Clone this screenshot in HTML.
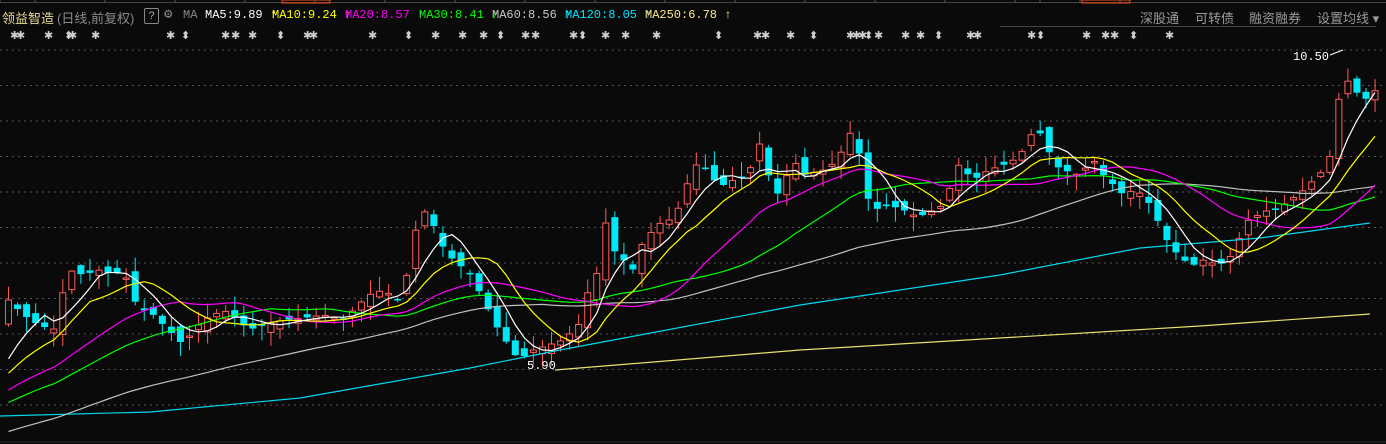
<!DOCTYPE html>
<html><head><meta charset="utf-8"><style>
html,body{margin:0;padding:0;background:#0a0a0a;width:1386px;height:444px;overflow:hidden}
.hd{position:absolute;top:8px;font:12px "Liberation Mono","Noto Sans CJK SC",monospace;white-space:nowrap}
.rm{position:absolute;top:8px;font:13px "Liberation Sans","Noto Sans CJK SC",sans-serif;color:#9a9a9a}
.st{position:absolute;top:29px;font:bold 11px "DejaVu Sans",sans-serif;color:#d0d0d0}
svg{position:absolute;left:0;top:0}
</style></head><body>
<svg id="c" width="1386" height="444"></svg>
<div class="hd" style="left:2px;color:#e8d89c;font-family:'Liberation Sans','Noto Sans CJK SC',sans-serif;font-size:13px">领益智造</div>
<div class="hd" style="left:57px;color:#8a8a8a;font-family:'Liberation Sans','Noto Sans CJK SC',sans-serif;font-size:13px">(日线,前复权)</div>
<div style="position:absolute;left:144px;top:8px;width:13px;height:14px;border:1px solid #888;border-radius:2px;color:#aaa;font:11px 'Liberation Sans';text-align:center;line-height:14px">?</div>
<div class="hd" style="left:164px;color:#888;font-size:14px;top:6px">⚙</div>
<div class="hd" style="left:183px;color:#888">MA</div>
<div class="hd" style="left:205px;color:#fff">MA5:9.89 ↑</div>
<div class="hd" style="left:272px;color:#ffff00">MA10:9.24 ↑</div>
<div class="hd" style="left:345px;color:#ff00ff">MA20:8.57 ↑</div>
<div class="hd" style="left:419px;color:#00ff00">MA30:8.41 ↑</div>
<div class="hd" style="left:492px;color:#c8c8c8">MA60:8.56 ↑</div>
<div class="hd" style="left:565px;color:#00e5ff">MA120:8.05 ↑</div>
<div class="hd" style="left:645px;color:#ffe88a">MA250:6.78 ↑</div>
<div class="rm" style="left:1140px">深股通</div>
<div class="rm" style="left:1195px">可转债</div>
<div class="rm" style="left:1249px">融资融券</div>
<div class="rm" style="left:1317px">设置均线 ▾</div>
<div id="stars"></div>
<script>
var S=document.getElementById('c'),h='';
h+='<line x1="0" y1="2.5" x2="1386" y2="2.5" stroke="#444"/>';
[0,35,105,175,245,315,385,455,525,595,665,735,805,875,945,1015,1040,1080,1120].forEach(function(x){h+='<line x1="'+x+'" y1="0" x2="'+x+'" y2="3" stroke="#555"/>';});
h+='<rect x="282" y="0" width="48" height="3" fill="none" stroke="#ff4a1a"/>';
h+='<rect x="1082" y="0" width="48" height="3" fill="none" stroke="#ff4a1a"/>';
h+='<line x1="1000" y1="26.5" x2="1376" y2="26.5" stroke="#444"/>';
[50,85.5,121,156.5,192,227.5,263,298.5,334,369.5,405].forEach(function(y){h+='<line x1="0" y1="'+y+'" x2="1386" y2="'+y+'" stroke="#555" stroke-dasharray="2 4"/>';});
h+='<line x1="0" y1="442" x2="1386" y2="442" stroke="#333"/>';
var K=[[5,300],[20,315],[35,325],[50,330],[65,270],[80,275],[95,270],[110,275],[120,270],[130,300],[140,310],[150,315],[160,325],[170,335],[180,345],[190,330],[200,320],[210,315],[220,310],[235,320],[245,330],[260,325],[280,320],[300,318],[320,315],[340,320],[350,310],[365,295],[380,290],[395,300],[405,270],[415,215],[425,210],[435,240],[445,255],[455,265],[465,270],[475,290],[485,310],[495,330],[505,345],[515,360],[530,350],[545,345],[560,340],[575,325],[585,290],[595,270],[600,215],[610,250],[620,260],[630,270],[640,240],[660,220],[670,220],[680,195],[690,165],[700,165],[710,180],[720,185],[730,180],[745,175],[755,140],[765,175],[775,195],[790,160],[800,175],[820,170],[835,160],[845,130],[855,150],[865,200],[875,210],[885,205],[900,210],[910,215],[920,215],[930,210],[940,205],[955,165],[970,180],[985,170],[1000,165],[1010,160],[1020,150],[1030,130],[1040,135],[1050,165],[1060,170],[1075,175],[1090,160],[1100,175],[1110,185],[1120,195],[1130,190],[1140,195],[1150,210],[1160,235],[1170,250],[1180,260],[1190,265],[1200,260],[1215,265],[1225,260],[1235,240],[1245,220],[1255,215],[1265,210],[1275,210],[1285,200],[1295,195],[1305,185],[1315,175],[1325,165],[1335,100],[1345,80],[1355,95],[1365,100],[1372,90]];
function f(x){if(x<=K[0][0])return K[0][1];for(var i=1;i<K.length;i++){if(x<=K[i][0]){var a=K[i-1],b=K[i];return a[1]+(b[1]-a[1])*(x-a[0])/(b[0]-a[0]);}}return K[K.length-1][1];}
var seed=7;function r(){seed=(seed*16807)%2147483647;return seed/2147483647;}
var cl=[],xs=[],pre=[];
for(var i=0;i<80;i++){var t=i/79;pre.push(485-t*t*115+(r()-.5)*10);}
for(var x=5;x<=1373;x+=9.05){xs.push(x);cl.push(f(x));}
var all=pre.concat(cl);
for(var i=0;i<xs.length;i++){var x=xs[i],c=cl[i],o=(i?cl[i-1]:c+20)+(r()-.5)*14;
var hi=Math.min(o,c)-r()*14-1,lo=Math.max(o,c)+r()*14+1;var up=c<o;var col=up?'#ff5a5a':'#00e8f5';
h+='<line x1="'+(x+3.5)+'" y1="'+hi+'" x2="'+(x+3.5)+'" y2="'+lo+'" stroke="'+col+'"/>';
var t=Math.min(o,c),bh=Math.max(1.5,Math.abs(o-c));
if(up)h+='<rect x="'+(x+.5)+'" y="'+t+'" width="6" height="'+bh+'" fill="#0a0a0a" stroke="'+col+'"/>';
else h+='<rect x="'+x+'" y="'+t+'" width="7" height="'+bh+'" fill="'+col+'"/>';}
function ma(n,col){var p='';for(var i=0;i<xs.length;i++){var j=i+80,s=0;for(var k=0;k<n;k++)s+=all[j-k];p+=(i?'L':'M')+(xs[i]+3.5).toFixed(1)+' '+(s/n).toFixed(1);}h+='<path d="'+p+'" fill="none" stroke="'+col+'" stroke-width="1.2"/>';}
h+='<path d="M0 416 L150 412 L300 398 L470 368 L560 350 L640 335 L800 305 L1000 275 L1140 248 L1260 238 L1370 223" fill="none" stroke="#00d8f0" stroke-width="1.2"/>';
h+='<path d="M555 370 L800 350 L1000 338 L1200 326 L1370 314" fill="none" stroke="#e8e070" stroke-width="1.2"/>';
ma(60,'#c0c0c0');ma(30,'#00ff00');ma(20,'#ff00ff');ma(10,'#ffff00');ma(5,'#ffffff');
h+='<text x="1293" y="60" fill="#fff" font-family="Liberation Mono" font-size="12">10.50</text><path d="M1330 55 L1343 50" stroke="#fff"/>';
h+='<text x="527" y="369" fill="#fff" font-family="Liberation Mono" font-size="12">5.90</text>';
S.innerHTML=h;
var st=[14,20,48,68,72,95,170,185,225,235,252,280,307,313,372,408,435,462,483,500,525,535,573,582,605,625,656,718,757,765,790,813,850,856,862,868,878,905,920,938,970,977,1031,1040,1086,1105,1114,1133,1169];
var sh='';st.forEach(function(x,i){sh+='<div class="st" style="left:'+(x-4)+'px">'+(i%4==3?'⬍':'✱')+'</div>';});
document.getElementById('stars').innerHTML=sh;
</script>
</body></html>
